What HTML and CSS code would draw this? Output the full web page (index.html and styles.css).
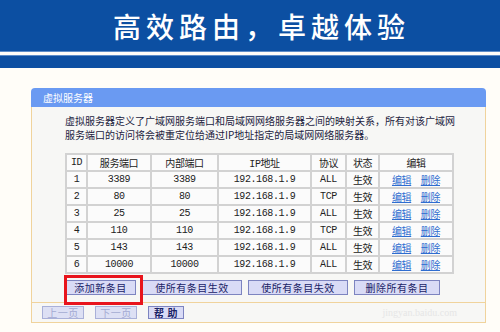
FILE: index.html
```html
<!DOCTYPE html>
<html lang="zh-CN">
<head>
    <meta charset="UTF-8">
    <meta name="viewport" content="width=device-width, initial-scale=1.0">
    <title>虚拟服务器</title>
    <link rel="stylesheet" href="styles.css">
</head>
<body>
    <header class="banner">
        <h1 class="banner-title">高效路由，卓越体验</h1>
    </header>
    <div class="banner-bar"></div>

    <div class="panel">
        <div class="panel-head">虚拟服务器</div>
        <div class="panel-body">
            <p class="desc">虚拟服务器定义了广域网服务端口和局域网网络服务器之间的映射关系，所有对该广域网服务端口的访问将会被重定位给通过IP地址指定的局域网网络服务器。</p>

            <table class="vs-table">
                <colgroup>
                    <col style="width:21px">
                    <col style="width:64px">
                    <col style="width:67px">
                    <col style="width:93px">
                    <col style="width:35px">
                    <col style="width:33px">
                    <col style="width:74px">
                </colgroup>
                <tr class="head-row">
                    <th>ID</th><th>服务端口</th><th>内部端口</th><th>IP地址</th><th>协议</th><th>状态</th><th>编辑</th>
                </tr>
                <tr><td>1</td><td>3389</td><td>3389</td><td>192.168.1.9</td><td>ALL</td><td>生效</td><td><a href="#">编辑</a> <a href="#">删除</a></td></tr>
                <tr><td>2</td><td>80</td><td>80</td><td>192.168.1.9</td><td>TCP</td><td>生效</td><td><a href="#">编辑</a> <a href="#">删除</a></td></tr>
                <tr><td>3</td><td>25</td><td>25</td><td>192.168.1.9</td><td>ALL</td><td>生效</td><td><a href="#">编辑</a> <a href="#">删除</a></td></tr>
                <tr><td>4</td><td>110</td><td>110</td><td>192.168.1.9</td><td>TCP</td><td>生效</td><td><a href="#">编辑</a> <a href="#">删除</a></td></tr>
                <tr><td>5</td><td>143</td><td>143</td><td>192.168.1.9</td><td>ALL</td><td>生效</td><td><a href="#">编辑</a> <a href="#">删除</a></td></tr>
                <tr><td>6</td><td>10000</td><td>10000</td><td>192.168.1.9</td><td>ALL</td><td>生效</td><td><a href="#">编辑</a> <a href="#">删除</a></td></tr>
            </table>

            <div class="actions">
                <span class="marked">
                    <button class="btn btn-add">添加新条目</button>
                    <span class="red-box"></span>
                </span>
                <button class="btn btn-wide">使所有条目生效</button>
                <button class="btn btn-wide">使所有条目失效</button>
                <button class="btn btn-del">删除所有条目</button>
            </div>

            <div class="pager">
                <button class="btn btn-small" disabled>上一页</button>
                <button class="btn btn-small" disabled>下一页</button>
                <button class="btn btn-help">帮 助</button>
            </div>

            <span class="watermark">jingyan.baidu.com</span>
        </div>
    </div>
</body>
</html>
```

FILE: styles.css
```css
/* page */
body {
    margin: 0;
    background: #fffdf8;
    font-family: "Noto Sans CJK SC", "Noto Sans", sans-serif;
}

/* top banner */
.banner {
    height: 51px;
    background: #0c4fa2;
    border-bottom: 1px solid #5c8cc8;
    display: flex;
    align-items: center;
    justify-content: center;
}

.banner-title {
    margin: 0 0 0 23px;
    color: #fff;
    font-size: 28px;
    font-weight: 500;
    letter-spacing: 5px;
}

.banner-bar {
    height: 12px;
    margin-top: 3px;
    background: #0c4fa2;
    border-top: 1px solid #5c8cc8;
}

/* router panel */
.panel {
    width: 455px;
    margin: 20px 0 0 31px;
}

.panel-head {
    height: 19px;
    line-height: 19px;
    padding-left: 12px;
    background: #6a9af2;
    border-radius: 4px 4px 0 0;
    color: #fff;
    font-size: 10px;
}

.panel-body {
    position: relative;
    background: #f7f7f5;
    border: 1px solid #f0d39c;
    border-top: none;
    padding: 7px 0 3px 0;
    color: #1c1c40;
}

.desc {
    margin: 0 0 0 33px;
    width: 393px;
    font-size: 10px;
    line-height: 14px;
}

/* table */
.vs-table {
    margin: 11px 0 0 33px;
    border-collapse: collapse;
    table-layout: fixed;
    width: 387px;
    font-family: "Liberation Mono", "Noto Sans CJK SC", monospace;
    font-size: 10px;
    letter-spacing: -0.4px;
    color: #222;
}

.vs-table th,
.vs-table td {
    height: 14px;
    padding: 0;
    border: 2px solid #d2d2d2;
    background: #fbfbfb;
    text-align: center;
    font-weight: normal;
    white-space: nowrap;
}

.vs-table a {
    color: #2f6dd0;
    text-decoration: underline;
    margin: 0 2px;
}

/* buttons */
.btn {
    height: 15px;
    padding: 0;
    background: #d9dbf6;
    border: 1px solid #7d84c0;
    color: #1a2366;
    font-family: "Noto Sans CJK SC", sans-serif;
    font-size: 10px;
    line-height: 13px;
    letter-spacing: 0.5px;
}

.actions {
    display: flex;
    gap: 6px;
    margin: 6px 0 0 33px;
}

.marked {
    position: relative;
    display: flex;
}

.btn-add {
    width: 71px;
}

.btn-wide {
    width: 100px;
}

.btn-del {
    width: 86px;
}

.red-box {
    position: absolute;
    left: -1px;
    top: -5px;
    width: 73px;
    height: 24px;
    border: 3px solid #e8141c;
}

.pager {
    display: flex;
    gap: 11px;
    margin-top: 7px;
    padding: 3px 0 0 10px;
    border-top: 1px solid #f0d39c;
}

.btn-small {
    width: 42px;
    height: 13px;
    line-height: 11px;
}

.btn-small:disabled {
    background: #dde0f4;
    border-color: #a9b0d8;
    color: #a3aad2;
}

.btn-help {
    width: 36px;
    height: 13px;
    line-height: 11px;
    font-weight: bold;
}

.watermark {
    position: absolute;
    right: 28px;
    bottom: 4px;
    color: #e6e6e6;
    font-family: "Liberation Serif", serif;
    font-size: 10px;
}
```
